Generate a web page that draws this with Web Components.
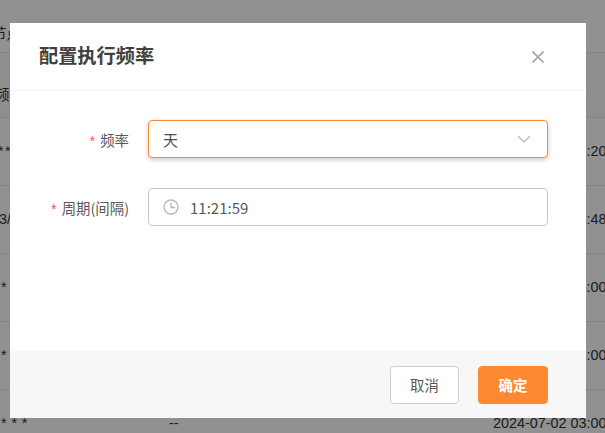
<!DOCTYPE html>
<html lang="zh">
<head>
<meta charset="utf-8">
<title>配置执行频率</title>
<style>
  html, body { margin: 0; height: 100%; overflow: hidden; background: #fff; }
  body { font-family: "Liberation Sans", "Noto Sans CJK SC", sans-serif; }
</style>
</head>
<body>
<bg-table></bg-table>
<modal-dialog heading="配置执行频率">
  <form-row label="频率"><freq-select value="天"></freq-select></form-row>
  <form-row label="周期(间隔)"><time-input value="11:21:59"></time-input></form-row>
  <ui-button slot="footer">取消</ui-button>
  <ui-button slot="footer" primary>确定</ui-button>
</modal-dialog>

<script>
// table behind the dialog, only its edges show
class BgTable extends HTMLElement {
  constructor() {
    super();
    this.attachShadow({ mode: "open" });
    // left text, left offset, word spacing, middle, right
    const rows = [
      ["节点", -8, .8, "", ""],
      ["频率", -5, .8, "", ""],
      ["* * * * *", -2, -2.5, "", "2024-07-02 03:20"],
      ["2023/", -25, .8, "", "2024-07-02 03:48"],
      ["* * * * *", 1, .8, "", "2024-07-02 03:00"],
      ["* * * * *", 1, .8, "", "2024-07-02 03:00"],
      ["* * *", 1, .8, "--", "2024-07-02 03:00"]
    ];
    this.shadowRoot.innerHTML = `
    <style>
      :host { display: block; height: 100vh; overflow: hidden; color: #333; font: 14.4px "Liberation Sans", "Noto Sans CJK SC", sans-serif; }
      .row { box-sizing: border-box; height: 68px; padding-bottom: 2px; border-top: 1px solid #e8e8e8; display: grid; grid-template-columns: 10px 1fr 112px; align-items: center; white-space: nowrap; }
      .row.first { height: 52px; border: 0; padding: 12px 0 0; }
      .row.head { height: 65px; background: #fafafa; padding: 16px 0 0; }
      .b { padding-left: 159px; }
      .c { overflow: hidden; }
    </style>
    ${rows.map((r, i) => `<div class="row ${i == 0 ? "first" : i == 1 ? "head" : ""}">
      <div style="margin-left:${r[1]}px;word-spacing:${r[2]}px">${r[0]}</div><div class="b">${r[3]}</div><div class="c">${r[4]}</div>
    </div>`).join("")}`;
  }
}
customElements.define("bg-table", BgTable);

class ModalDialog extends HTMLElement {
  constructor() {
    super();
    this.attachShadow({ mode: "open" });
    this.shadowRoot.innerHTML = `
    <style>
      :host { position: fixed; inset: 0; background: rgba(0,0,0,.43); display: block; }
      .box { position: absolute; left: 10px; top: 23px; width: 576px; height: 395px; background: #fff; display: flex; flex-direction: column; font-family: "Noto Sans CJK SC", sans-serif; }
      header { box-sizing: border-box; height: 68px; border-bottom: 1px solid #f5f5f5; display: flex; align-items: center; justify-content: space-between; padding: 0 42px 0 29px; flex: none; }
      h2 { margin: 0; font-size: 19.2px; font-weight: 700; color: #404040; line-height: 26px; margin-top: -3px; }
      svg { display: block; }
      .body { flex: 1; padding-top: 29px; display: flex; flex-direction: column; gap: 30px; }
      footer { height: 67px; background: #f7f7f7; display: flex; justify-content: flex-end; align-items: center; gap: 19px; padding: 0 38px 0 0; flex: none; }
    </style>
    <div class="box">
      <header>
        <h2>${this.getAttribute("heading")}</h2>
        <svg width="12" height="12" viewBox="0 0 12 12" fill="none" stroke="#a6a6a6" stroke-width="1.6"><path d="M.5.5l11 11M11.500 .5l-11 11"/></svg>
      </header>
      <div class="body"><slot></slot></div>
      <footer><slot name="footer"></slot></footer>
    </div>`;
  }
}
customElements.define("modal-dialog", ModalDialog);

class FormRow extends HTMLElement {
  constructor() {
    super();
    this.attachShadow({ mode: "open" });
    this.shadowRoot.innerHTML = `
    <style>
      :host { display: flex; align-items: center; height: 38px; }
      label { width: 119px; flex: none; text-align: right; font-size: 14.4px; color: #595959; white-space: nowrap; }
      i { font-style: normal; color: #f5555a; margin-right: 5px; font-family: "Liberation Sans", sans-serif; }
      .ctl { margin-left: 19px; width: 400px; }
    </style>
    <label><i>*</i>${this.getAttribute("label")}</label>
    <div class="ctl"><slot></slot></div>`;
  }
}
customElements.define("form-row", FormRow);

class FreqSelect extends HTMLElement {
  constructor() {
    super();
    this.attachShadow({ mode: "open" });
    this.shadowRoot.innerHTML = `
    <style>
      :host { display: flex; box-sizing: border-box; height: 38px; border: 1px solid #ff8833; border-radius: 4px; box-shadow: 0 2px 5px rgba(0,0,0,.2); align-items: center; justify-content: space-between; padding: 0 16px 0 14px; background: #fff; font-size: 15px; color: #4d4d4d; }
      svg { display: block; }
    </style>
    <span>${this.getAttribute("value")}</span>
    <svg width="14" height="8" viewBox="0 0 14 8" fill="none" stroke="#b5b5b5" stroke-width="1.2"><path d="M1 1l6 6 6-6"/></svg>`;
  }
}
customElements.define("freq-select", FreqSelect);

class TimeInput extends HTMLElement {
  constructor() {
    super();
    this.attachShadow({ mode: "open" });
    this.shadowRoot.innerHTML = `
    <style>
      :host { display: flex; box-sizing: border-box; height: 38px; border: 1px solid #c8c8c8; border-radius: 4px; align-items: center; gap: 11px; padding-left: 14px; background: #fff; font-size: 15px; color: #595959; }
      svg { display: block; flex: none; }
    </style>
    <svg width="16" height="16" viewBox="0 0 16 16" fill="none" stroke="#b5b5b5" stroke-width="1.3"><circle cx="8" cy="8" r="7"/><path d="M8 3.500V8.500H12"/></svg>
    <span>${this.getAttribute("value")}</span>`;
  }
}
customElements.define("time-input", TimeInput);

class UiButton extends HTMLElement {
  constructor() {
    super();
    this.attachShadow({ mode: "open" });
    this.shadowRoot.innerHTML = `
    <style>
      :host { display: flex; box-sizing: border-box; width: 69px; height: 38px; align-items: center; justify-content: center; border: 1px solid #cfcfcf; border-radius: 4px; background: #fff; color: #595959; font-size: 14.4px; }
      :host([primary]) { width: 70px; background: #ff8833; border-color: #ff8833; color: #fff; font-weight: 700; }
    </style>
    <slot></slot>`;
  }
}
customElements.define("ui-button", UiButton);
</script>
</body>
</html>
